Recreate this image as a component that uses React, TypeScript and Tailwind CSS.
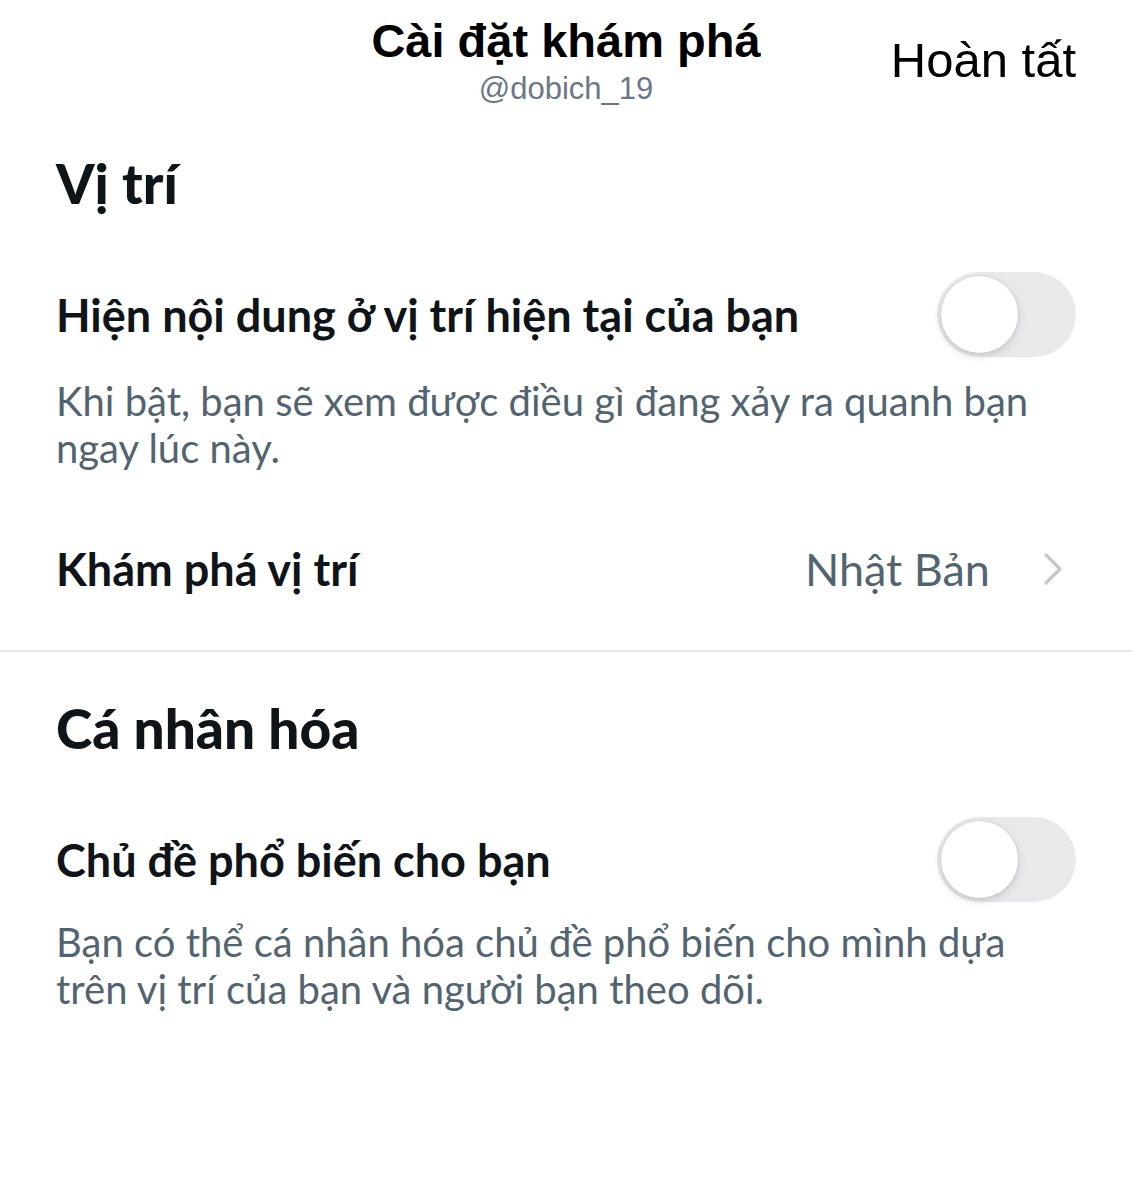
function Toggle() {
  return (
    <div className="w-[139px] h-[85px] shrink-0 rounded-full bg-[#e9e9eb] flex items-center px-[4px]">
      <div className="w-[77px] h-[77px] rounded-full bg-white shadow-[0_3px_8px_rgba(0,0,0,0.15),0_0_0_1px_rgba(0,0,0,0.04)]" />
    </div>
  );
}

function Chevron() {
  return (
    <svg width="22" height="34" viewBox="0 0 22 34" fill="none" className="shrink-0">
      <path d="M4 3 L18 17 L4 31" stroke="#c7c7cc" strokeWidth="3.2" strokeLinecap="round" strokeLinejoin="round" />
    </svg>
  );
}

export default function App() {
  return (
    <div className="w-[1132px] h-[1200px] bg-white font-['Lato','Noto_Sans',sans-serif] text-[#0f1419]">
      {/* Header */}
      <div className="h-[118px] grid grid-cols-[1fr_auto_1fr] font-['Liberation_Sans','Arial',sans-serif]">
        <div />
        <div className="flex flex-col items-center pt-[15px]">
          <div className="text-[47px] leading-[52px] font-bold text-black">Cài đặt khám phá</div>
          <div className="mt-[4px] text-[31px] leading-[36px] text-[#6b7785]">@dobich_19</div>
        </div>
        <div className="flex justify-end pt-[32px] pr-[56px]">
          <span className="text-[49px] leading-[56px] text-black">Hoàn tất</span>
        </div>
      </div>

      {/* Vị trí */}
      <div className="px-[56px] pt-[32px]">
        <h2 className="text-[55px] leading-[66px] font-black">Vị trí</h2>
        <div className="mt-[56px] flex items-center justify-between h-[85px]">
          <span className="text-[45px] leading-[54px] font-bold">Hiện nội dung ở vị trí hiện tại của bạn</span>
          <Toggle />
        </div>
        <p className="mt-[21px] text-[40px] leading-[47px] text-[#536471]">
          Khi bật, bạn sẽ xem được điều gì đang xảy ra quanh bạn ngay lúc này.
        </p>
        <div className="mt-[67px] flex items-center h-[60px]">
          <span className="text-[45px] leading-[54px] font-bold flex-1">Khám phá vị trí</span>
          <span className="text-[45px] leading-[54px] text-[#536471]">Nhật Bản</span>
          <div className="ml-[52px] mr-[12px]">
            <Chevron />
          </div>
        </div>
      </div>

      <div className="mt-[51px] h-[2px] bg-[#e5e7ea]" />

      {/* Cá nhân hóa */}
      <div className="px-[56px] pt-[43px]">
        <h2 className="text-[55px] leading-[66px] font-black">Cá nhân hóa</h2>
        <div className="mt-[56px] flex items-center justify-between h-[85px]">
          <span className="text-[45px] leading-[54px] font-bold">Chủ đề phổ biến cho bạn</span>
          <Toggle />
        </div>
        <p className="mt-[17px] text-[40px] leading-[47px] text-[#536471]">
          Bạn có thể cá nhân hóa chủ đề phổ biến cho mình dựa trên vị trí của bạn và người bạn theo dõi.
        </p>
      </div>
    </div>
  );
}
